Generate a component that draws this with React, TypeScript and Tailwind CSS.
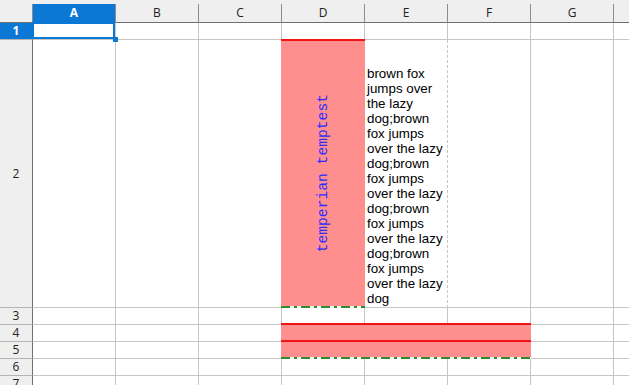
import React from "react";

const cols = ["A", "B", "C", "D", "E", "F", "G", "H"];
const rows = [1, 2, 3, 4, 5, 6, 7];

const sentence =
  "brown fox jumps over the lazy dog;brown fox jumps over the lazy dog;brown fox jumps over the lazy dog;brown fox jumps over the lazy dog;brown fox jumps over the lazy dog";

const gridLine = "border-r border-b border-[#c6c6c6]";
const dashDot =
  "bg-[repeating-linear-gradient(90deg,#2b8f2b_0_9px,transparent_9px_13px,#2b8f2b_13px_16px,transparent_16px_20px)]";

function ColHead({ label, active }: { label: string; active?: boolean }) {
  return (
    <div
      className={`flex items-center justify-center border-r border-b border-r-[#8c8c8c] border-b-[#707070] text-[12px] ${
        active ? "bg-[#0b78d6] font-bold text-white" : "bg-[#efefef] text-[#222]"
      }`}
    >
      {label}
    </div>
  );
}

function RowHead({ n, active }: { n: number; active?: boolean }) {
  return (
    <div
      className={`flex items-center justify-center border-r border-b border-r-[#707070] border-b-[#b4b4b4] text-[12px] ${
        active ? "bg-[#0b78d6] font-bold text-white" : "bg-[#efefef] text-[#222]"
      }`}
    >
      {n}
    </div>
  );
}

// D2: pink fill, red top, green dash-dot bottom, rotated mono text
function RotatedCell() {
  return (
    <div className="relative z-10 -mt-px -ml-px flex flex-col">
      <div className="h-[2px] bg-[#f01414]" />
      <div className="flex flex-1 items-center justify-center bg-[#ff8f8f]">
        <span className="rotate-180 font-['Liberation_Mono',monospace] text-[14.67px] leading-none whitespace-nowrap text-[#2b2bff] [writing-mode:vertical-rl]">
          temperian temptest
        </span>
      </div>
      <div className={`h-[2px] bg-white ${dashDot}`} />
    </div>
  );
}

// E2: wrapped text, bottom aligned
function WrapCell() {
  return (
    <div className="flex flex-col justify-end border-r border-b border-dashed border-[#c6c6c6] pb-px pl-[2px] [border-bottom-style:solid]">
      <p className="font-['Liberation_Sans',Arial,sans-serif] text-[13.33px] leading-[15px] text-black">
        {sentence}
      </p>
    </div>
  );
}

// D4:F5 merged block
function MergedBlock() {
  return (
    <div className="relative z-10 col-span-3 col-start-5 row-span-2 row-start-5 -mt-[2px] -ml-px flex flex-col">
      <div className="h-[2px] bg-[#f01414]" />
      <div className="h-[15px] bg-[#ff8f8f]" />
      <div className="h-[2px] bg-[#f01414]" />
      <div className="h-[15px] bg-[#ff8f8f]" />
      <div className={`h-[2px] bg-white ${dashDot}`} />
    </div>
  );
}

function SelectedCell() {
  return (
    <div className={`relative ${gridLine}`}>
      <div className="absolute -top-px -left-px right-0 bottom-0 z-20 border-2 border-[#0b78d6]" />
      <div className="absolute top-[14px] left-[80px] z-30 h-[5px] w-[5px] bg-[#0b78d6]" />
    </div>
  );
}

export default function App() {
  const merged = new Set(["D4", "E4", "F4", "D5", "E5", "F5"]);

  return (
    <div className="h-[385px] w-[629px] overflow-hidden bg-white font-['Open_Sans',sans-serif]">
      <div className="h-1 bg-[#efefef]" />
      <div className="grid grid-cols-[33px_repeat(8,83px)] grid-rows-[19px_17px_268px_17px_17px_17px_17px_17px]">
        <div className="border-r border-b border-r-[#8c8c8c] border-b-[#707070] bg-[#efefef]" />
        {cols.map((c) => (
          <ColHead key={c} label={c} active={c === "A"} />
        ))}

        <MergedBlock />

        {rows.map((r) => (
          <React.Fragment key={r}>
            <RowHead n={r} active={r === 1} />
            {cols.map((c) => {
              const id = `${c}${r}`;
              if (merged.has(id)) return null;
              if (id === "A1") return <SelectedCell key={id} />;
              if (id === "D2") return <RotatedCell key={id} />;
              if (id === "E2") return <WrapCell key={id} />;
              return <div key={id} className={gridLine} />;
            })}
          </React.Fragment>
        ))}
      </div>
    </div>
  );
}
